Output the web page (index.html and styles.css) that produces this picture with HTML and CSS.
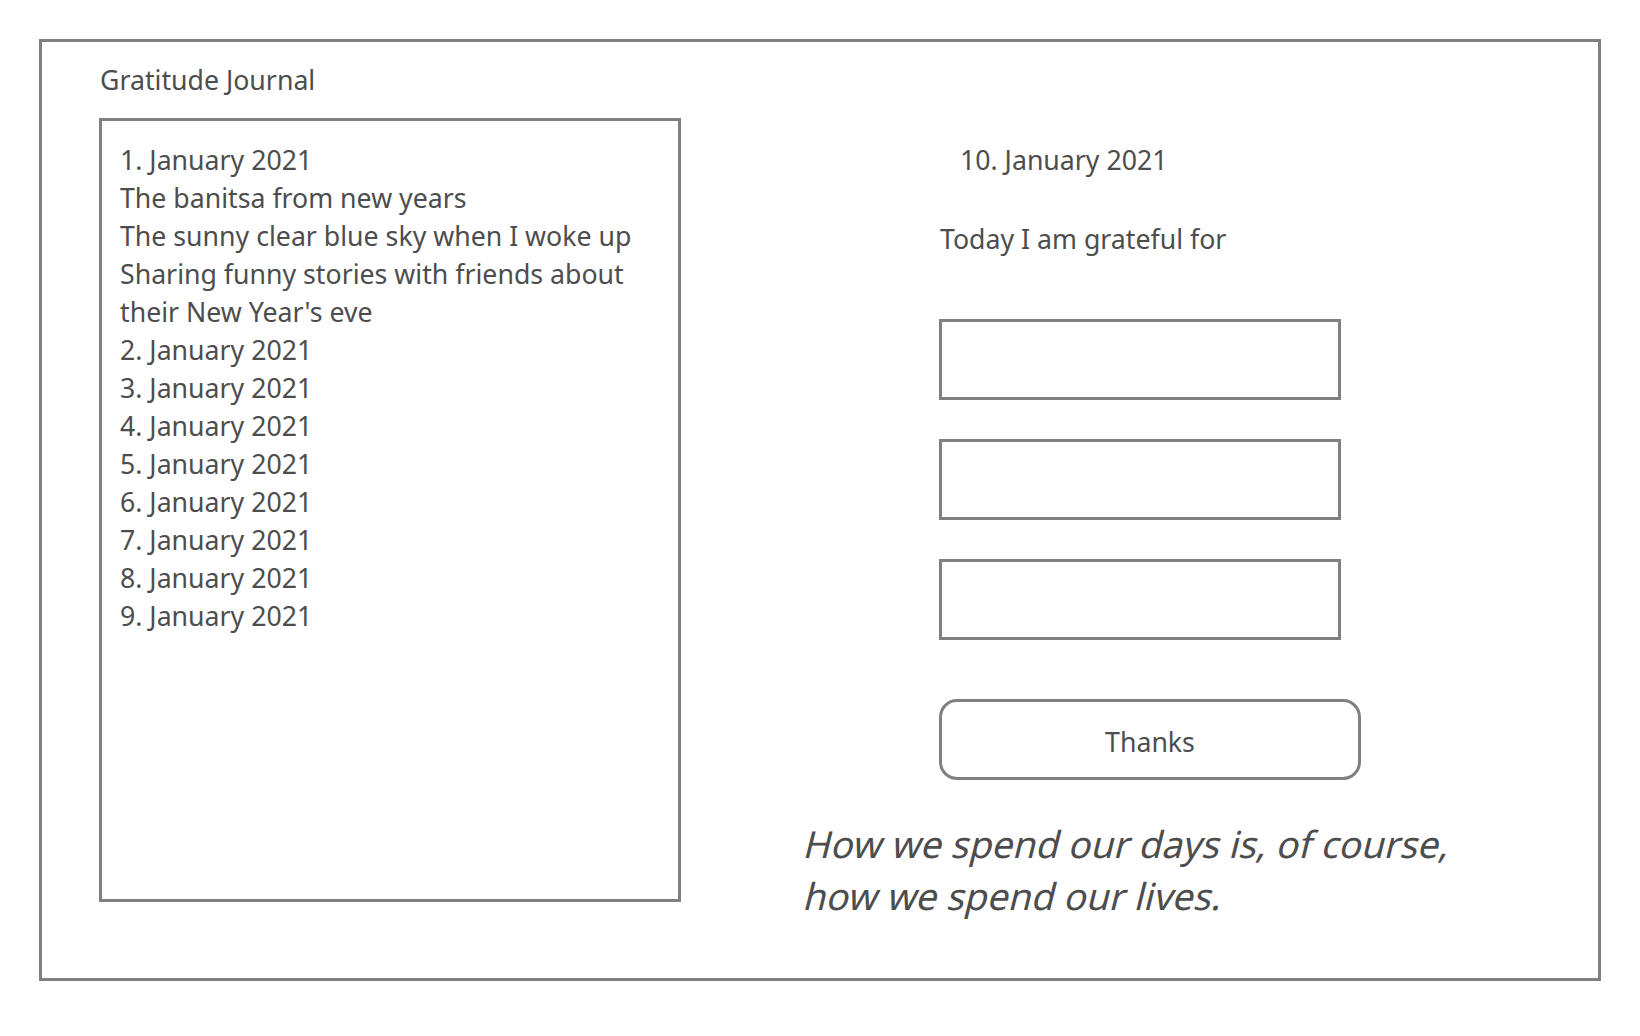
FILE: index.html
```html
<!DOCTYPE html>
<html lang="en">
<head>
<meta charset="utf-8">
<title>Gratitude Journal</title>
<link rel="stylesheet" href="styles.css">
</head>
<body>
<div class="frame">
  <div class="left">
    <div class="title">Gratitude Journal</div>
    <div class="journal">
      <div class="line">1. January 2021</div>
      <div class="line">The banitsa from new years</div>
      <div class="line">The sunny clear blue sky when I woke up</div>
      <div class="line">Sharing funny stories with friends about their New Year's eve</div>
      <div class="line">2. January 2021</div>
      <div class="line">3. January 2021</div>
      <div class="line">4. January 2021</div>
      <div class="line">5. January 2021</div>
      <div class="line">6. January 2021</div>
      <div class="line">7. January 2021</div>
      <div class="line">8. January 2021</div>
      <div class="line">9. January 2021</div>
    </div>
  </div>
  <div class="right">
    <div class="date">10. January 2021</div>
    <div class="prompt">Today I am grateful for</div>
    <div class="field first"></div>
    <div class="field"></div>
    <div class="field"></div>
    <div class="button">Thanks</div>
    <div class="quote">
      <div class="quote-line">How we spend our days is, of course,</div>
      <div class="quote-line">how we spend our lives.</div>
    </div>
  </div>
</div>
</body>
</html>
```

FILE: styles.css
```css
html, body {
  margin: 0;
  padding: 0;
  background: #ffffff;
}

body {
  font-family: "Noto Sans", "Open Sans", sans-serif;
  color: #4d4d4d;
  font-size: 26.7px;
  line-height: 38px;
}

.frame {
  box-sizing: border-box;
  margin: 39px 0 0 39px;
  width: 1562px;
  height: 942px;
  border: 3px solid #808080;
  padding: 19px 0 0 57px;
  display: flex;
}

.left {
  width: 582px;
  flex: none;
}

.title {
  padding-left: 1px;
}

.journal {
  box-sizing: border-box;
  margin-top: 19px;
  width: 582px;
  height: 784px;
  border: 3px solid #808080;
  padding: 20px 24px 0 18px;
}

.right {
  margin-left: 121px;
  display: flex;
  flex-direction: column;
  align-items: flex-start;
}

.date {
  margin-top: 80px;
  margin-left: 158px;
}

.prompt {
  margin-top: 41px;
  margin-left: 138px;
}

.field {
  box-sizing: border-box;
  margin-top: 39px;
  margin-left: 137px;
  width: 402px;
  height: 81px;
  border: 3px solid #808080;
}

.field.first {
  margin-top: 61px;
}

.button {
  box-sizing: border-box;
  margin-top: 59px;
  margin-left: 137px;
  width: 422px;
  height: 81px;
  border: 3px solid #808080;
  border-radius: 18px;
  display: flex;
  align-items: center;
  justify-content: center;
  padding-top: 5px;
}

.quote {
  margin-top: 38px;
  font-size: 37.2px;
  line-height: 52px;
  white-space: nowrap;
}

.quote-line {
  transform: skewX(-14deg);
  transform-origin: 0 40px;
}
```
